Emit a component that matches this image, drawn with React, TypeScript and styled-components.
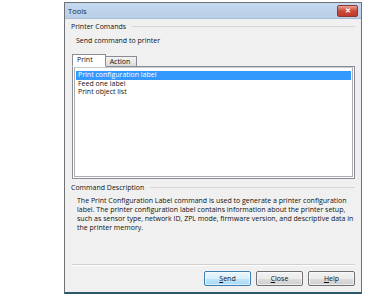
import React, { useState } from "react";
import styled, { createGlobalStyle } from "styled-components";

const Global = createGlobalStyle`
    html, body {
        margin: 0;
        padding: 0;
        background: #ffffff;
    }
    body {
        font-family: "Open Sans", "Noto Sans", sans-serif;
        font-size: 7px;
        color: #111111;
    }
`;

const Page = styled.div`
    padding: 2px 0 0 64px;
`;

const Window = styled.div`
    width: 296px;
    height: 289px;
    display: flex;
    flex-direction: column;
    border: 1px solid #6f7173;
    border-bottom: 2px solid #2d5768;
    background: #f0f0f0;
`;

const TitleBar = styled.div`
    height: 15px;
    display: flex;
    align-items: center;
    justify-content: space-between;
    padding: 0 3px 0 3px;
    background: linear-gradient(#c4d9ef, #b8cfe8);
    border-bottom: 1px solid #a8bcd3;
`;

const Title = styled.span`
    font-size: 7.5px;
    color: #1f2a36;
`;

const CloseButton = styled.div`
    width: 19px;
    height: 10px;
    border-radius: 2px;
    border: 1px solid #8c3a30;
    background: linear-gradient(#e8a195, #cb4a3a 50%, #c03a2a);
    display: flex;
    align-items: center;
    justify-content: center;
    color: #fff;
    font-size: 7px;
    font-weight: bold;
    line-height: 1;
`;

const Content = styled.div`
    flex: 1;
    display: flex;
    flex-direction: column;
    padding: 0 6px 6px 6px;
`;

const GroupHeader = styled.div<{ $top: number }>`
    display: flex;
    align-items: center;
    gap: 6px;
    height: 10px;
    margin-top: ${(p) => p.$top}px;
    &::after {
        content: "";
        flex: 1;
        height: 1px;
        background: #d5d5d5;
    }
`;

const Label = styled.div`
    height: 10px;
    line-height: 10px;
    margin: 5px 0 0 5px;
`;

const TabStrip = styled.div`
    display: flex;
    align-items: flex-end;
    height: 12px;
    margin: 8px 0 0 1px;
    position: relative;
    z-index: 1;
`;

const Tab = styled.div<{ $active?: boolean }>`
    box-sizing: border-box;
    height: ${(p) => (p.$active ? 13 : 10)}px;
    line-height: ${(p) => (p.$active ? 10 : 9)}px;
    padding: 0 ${(p) => (p.$active ? 12 : 6)}px 0 4px;
    border: 1px solid #898c95;
    border-bottom: ${(p) => (p.$active ? "1px solid #ffffff" : "none")};
    margin-bottom: ${(p) => (p.$active ? -1 : 0)}px;
    margin-left: ${(p) => (p.$active ? 0 : -1)}px;
    background: ${(p) =>
        p.$active ? "#ffffff" : "linear-gradient(#f2f2f2, #dcdcdc)"};
    cursor: default;
`;

const TabPanel = styled.div`
    height: 110px;
    margin-left: 1px;
    border: 1px solid #898c95;
    background: #ffffff;
    padding: 0 1px 1px 1px;
    display: flex;
`;

const ListBox = styled.div`
    flex: 1;
    border: 1px solid #abadb3;
    border-top: 1px solid #c9ccd3;
    padding: 3px 1px 0 1px;
    background: #ffffff;
`;

const ListItem = styled.div<{ $selected?: boolean }>`
    height: 8.5px;
    line-height: 8.5px;
    padding-left: 2px;
    background: ${(p) => (p.$selected ? "#3399ff" : "transparent")};
    color: ${(p) => (p.$selected ? "#ffffff" : "#111111")};
    cursor: default;
`;

const Description = styled.p`
    margin: 4px 0 0 6px;
    line-height: 9px;
    width: 282px;
`;

const Spacer = styled.div`
    flex: 1;
`;

const Separator = styled.div`
    height: 1px;
    background: #d0d0d0;
    border-bottom: 1px solid #ffffff;
    margin-left: 1px;
`;

const ButtonRow = styled.div`
    display: flex;
    justify-content: flex-end;
    gap: 5px;
    margin-top: 5px;
`;

const Button = styled.button<{ $default?: boolean }>`
    width: 47px;
    height: 15px;
    padding: 0;
    font-family: inherit;
    font-size: 7px;
    color: #111111;
    border-radius: 2px;
    border: 1px solid ${(p) => (p.$default ? "#3c7fb1" : "#707070")};
    background: ${(p) =>
        p.$default
            ? "linear-gradient(#eaf6fd, #d9f0fc 50%, #bee6fd 51%, #a7d9f5)"
            : "linear-gradient(#f2f2f2, #ebebeb 50%, #dddddd 51%, #cfcfcf)"};
    box-shadow: inset 0 0 0 1px rgba(255, 255, 255, 0.6);
    u {
        text-decoration: underline;
    }
`;

const commands = ["Print configuration label", "Feed one label", "Print object list"];

export default function App(): React.ReactElement {
    const [selected, setSelected] = useState(0);
    const [tab, setTab] = useState("Print");

    return (
        <>
            <Global />
            <Page>
                <Window>
                    <TitleBar>
                        <Title>Tools</Title>
                        <CloseButton>✕</CloseButton>
                    </TitleBar>
                    <Content>
                        <GroupHeader $top={2}>Printer Comands</GroupHeader>
                        <Label>Send command to printer</Label>
                        <TabStrip>
                            {["Print", "Action"].map((t) => (
                                <Tab key={t} $active={tab === t} onClick={() => setTab(t)}>
                                    {t}
                                </Tab>
                            ))}
                        </TabStrip>
                        <TabPanel>
                            <ListBox>
                                {commands.map((c, i) => (
                                    <ListItem
                                        key={c}
                                        $selected={i === selected}
                                        onClick={() => setSelected(i)}
                                    >
                                        {c}
                                    </ListItem>
                                ))}
                            </ListBox>
                        </TabPanel>
                        <GroupHeader $top={3}>Command Description</GroupHeader>
                        <Description>
                            The Print Configuration Label command is used to generate a printer
                            configuration label. The printer configuration label contains
                            information about the printer setup, such as sensor type, network ID,
                            ZPL mode, firmware version, and descriptive data in the printer memory.
                        </Description>
                        <Spacer />
                        <Separator />
                        <ButtonRow>
                            <Button $default>
                                <u>S</u>end
                            </Button>
                            <Button>
                                <u>C</u>lose
                            </Button>
                            <Button>
                                <u>H</u>elp
                            </Button>
                        </ButtonRow>
                    </Content>
                </Window>
            </Page>
        </>
    );
}
